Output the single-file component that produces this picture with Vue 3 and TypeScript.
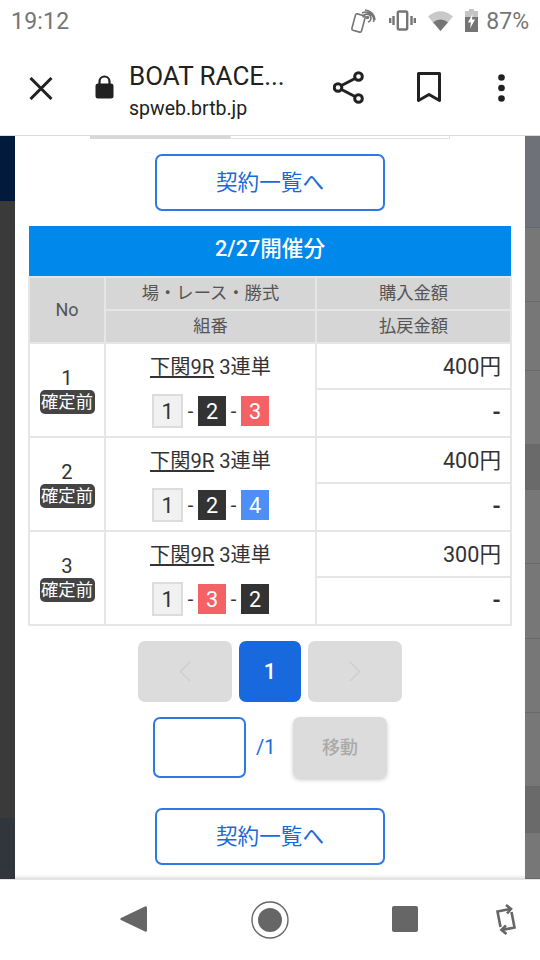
<script setup lang="ts">
interface Tile { n: number; kind: string }
interface Row { no: number; race: string; type: string; tiles: Tile[]; amount: string }

const rows: Row[] = [
  { no: 1, race: '下関9R', type: '3連単', amount: '400円', tiles: [{ n: 1, kind: 'white' }, { n: 2, kind: 'black' }, { n: 3, kind: 'red' }] },
  { no: 2, race: '下関9R', type: '3連単', amount: '400円', tiles: [{ n: 1, kind: 'white' }, { n: 2, kind: 'black' }, { n: 4, kind: 'blue' }] },
  { no: 3, race: '下関9R', type: '3連単', amount: '300円', tiles: [{ n: 1, kind: 'white' }, { n: 3, kind: 'red' }, { n: 2, kind: 'black' }] },
]

const stripes = [
  { h: 92, c: 'slate' }, { h: 74, c: 'mid' }, { h: 69, c: 'mid' }, { h: 74, c: 'mid' }, { h: 45, c: 'dark' },
  { h: 74, c: 'mid' }, { h: 75, c: 'mid' }, { h: 74, c: 'mid' }, { h: 74, c: 'mid' }, { h: 46, c: 'dark' }, { h: 46, c: 'mid' },
]
</script>

<template>
  <div class="screen">
    <header class="status">
      <span class="time">19:12</span>
      <span class="status-right">
        <svg class="ic-nfc" width="27" height="26" viewBox="0 0 27 26" fill="none" stroke="#757575">
          <rect x="3.5" y="6.5" width="10" height="17" rx="1.5" transform="rotate(15 8.5 15)" stroke-width="1.6" />
          <path d="M13 9.5a4 4 0 1 1 5 4.5M12 5a8 8 0 0 1 11.500 9M15 2a10.500 10.500 0 0 1 10 10" stroke-width="1.600" />
          <circle cx="17.500" cy="9.500" r="1.800" fill="#757575" stroke="none" />
        </svg>
        <svg class="ic-vib" width="27" height="21" viewBox="0 0 27 21" fill="none" stroke="#757575" stroke-width="2.400">
          <rect x="8.800" y="1.500" width="9.400" height="18" rx="1.500" />
          <path d="M4.500 6v9M1.200 8v5M22.500 6v9M25.800 8v5" />
        </svg>
        <svg class="ic-wifi" width="25" height="21" viewBox="0 0 25 21">
          <path d="M0 6.500Q12.500 -4 25 6.500L12.500 21Z" fill="#c9c9c9" />
          <path d="M5 12.300Q12.500 6.500 20 12.300L12.500 21Z" fill="#757575" />
        </svg>
        <svg class="ic-bat" width="13" height="23" viewBox="0 0 13 23">
          <path d="M4 0h5v2h4v8H0V2h4z" fill="#c4c4c4" />
          <path d="M0 8h13v15H0z" fill="#757575" />
          <path d="M7.500 5L3 13.500h3L5 19.500l5-9H7z" fill="#fff" />
        </svg>
        <span class="pct">87%</span>
      </span>
    </header>

    <div class="toolbar">
      <svg class="t-close" width="24" height="23" viewBox="0 0 24 23" fill="none" stroke="#212121" stroke-width="3">
        <path d="M1.500 1l21 21M22.500 1l-21 21" />
      </svg>
      <svg class="t-lock" width="19" height="24" viewBox="0 0 19 24">
        <path d="M4.500 9V6.500a5 5 0 0 1 10 0V9" fill="none" stroke="#212121" stroke-width="2.200" />
        <rect x="0.500" y="8.500" width="18" height="15" rx="2.500" fill="#212121" />
      </svg>
      <div class="t-title">
        <div class="t-name">BOAT RACE...</div>
        <div class="t-url">spweb.brtb.jp</div>
      </div>
      <svg class="t-share" width="31" height="33" viewBox="0 0 31 33" fill="none" stroke="#212121" stroke-width="3">
        <circle cx="25.500" cy="5.500" r="3.800" />
        <circle cx="5" cy="16.500" r="3.800" />
        <circle cx="25.500" cy="27.500" r="3.800" />
        <path d="M8.500 14.500l13.500-7M8.500 18.500l13.500 7" />
      </svg>
      <svg class="t-mark" width="24" height="31" viewBox="0 0 24 31" fill="none" stroke="#212121" stroke-width="3">
        <path d="M1.500 1.500h21v27L12 22.500 1.500 28.500z" stroke-linejoin="round" />
      </svg>
      <svg class="t-more" width="7" height="28" viewBox="0 0 7 28" fill="#212121">
        <circle cx="3.500" cy="3.500" r="3.300" />
        <circle cx="3.500" cy="14" r="3.300" />
        <circle cx="3.500" cy="24.500" r="3.300" />
      </svg>
    </div>

    <main class="main">
      <div class="strip strip-left">
        <div class="left-a"></div>
        <div class="left-b"></div>
        <div class="left-c"></div>
      </div>

      <section class="card">
        <div class="cut"><span class="cut-a"></span><span class="cut-b"></span></div>
        <button class="outline top-btn">契約一覧へ</button>

        <div class="date-bar">2/27開催分</div>
        <table class="grid">
          <colgroup>
            <col class="c1" />
            <col class="c2" />
            <col class="c3" />
          </colgroup>
          <thead>
            <tr class="hrow">
              <th rowspan="2">No</th>
              <th>場・レース・勝式</th>
              <th>購入金額</th>
            </tr>
            <tr class="hrow">
              <th>組番</th>
              <th>払戻金額</th>
            </tr>
          </thead>
          <tbody>
            <template v-for="r in rows" :key="r.no">
              <tr class="r1">
                <td rowspan="2" class="no">
                  <div class="no-num">{{ r.no }}</div>
                  <span class="badge">確定前</span>
                </td>
                <td rowspan="2" class="race">
                  <div class="race-name"><u>{{ r.race }}</u> {{ r.type }}</div>
                  <div class="tiles">
                    <template v-for="(t, i) in r.tiles" :key="i">
                      <span v-if="i > 0" class="dash">-</span>
                      <span class="tile" :class="t.kind">{{ t.n }}</span>
                    </template>
                  </div>
                </td>
                <td class="amt">{{ r.amount }}</td>
              </tr>
              <tr class="r2">
                <td class="amt minus">-</td>
              </tr>
            </template>
          </tbody>
        </table>

        <nav class="pager">
          <span class="pg pg-off">
            <svg width="12" height="21" viewBox="0 0 12 21" fill="none" stroke="#cfcfcf" stroke-width="1.500"><path d="M11 1L1.500 10.500 11 20" /></svg>
          </span>
          <span class="pg pg-on">1</span>
          <span class="pg pg-off">
            <svg width="12" height="21" viewBox="0 0 12 21" fill="none" stroke="#cfcfcf" stroke-width="1.500"><path d="M1 1l9.500 9.500L1 20" /></svg>
          </span>
        </nav>

        <div class="jump">
          <input class="jump-input" type="text" />
          <span class="jump-total">/1</span>
          <button class="jump-btn">移動</button>
        </div>

        <button class="outline bottom-btn">契約一覧へ</button>
      </section>

      <div class="strip strip-right">
        <div v-for="(s, i) in stripes" :key="i" class="stripe" :class="s.c" :style="{ height: s.h + 'px' }"></div>
      </div>
    </main>

    <footer class="nav">
      <svg class="n-back" width="27" height="28" viewBox="0 0 27 28" fill="#666">
        <path d="M25 1.500a1.500 1.500 0 0 1 2 1.300v22.400a1.500 1.500 0 0 1-2 1.300L1 15a1.200 1.200 0 0 1 0-2z" />
      </svg>
      <svg class="n-home" width="38" height="38" viewBox="0 0 38 38">
        <circle cx="19" cy="19" r="18" fill="none" stroke="#666" stroke-width="1.400" />
        <circle cx="19" cy="19" r="12" fill="#666" />
      </svg>
      <span class="n-square"></span>
      <svg class="n-rot" width="22" height="31" viewBox="0 0 22 31" fill="none" stroke="#666" stroke-width="2.600">
        <path d="M15 5L2.500 7.500l3 15.500" />
        <path d="M7 26l12.500-2.500-3-15.500" />
        <path d="M11 1l5 4-4 4.500M11 21.500l-4.500 4.500 5 4" />
      </svg>
    </footer>
  </div>
</template>

<style>
html, body { margin: 0; background: #fff; }
</style>

<style scoped>
.screen {
  width: 540px;
  height: 960px;
  display: flex;
  flex-direction: column;
  overflow: hidden;
  background: #fff;
  font-family: Roboto, "Noto Sans CJK JP", sans-serif;
}

.status {
  height: 47px;
  flex: none;
  display: flex;
  align-items: flex-start;
  justify-content: space-between;
  color: #757575;
  font-size: 23px;
}
.time { margin: 8px 0 0 11px; line-height: 28px; letter-spacing: 0.2px; }
.status-right { display: flex; align-items: flex-start; }
.ic-nfc { margin-top: 8px; }
.ic-vib { margin: 10px 0 0 12px; }
.ic-wifi { margin: 10px 0 0 12px; }
.ic-bat { margin: 9px 0 0 12px; }
.pct { margin: 8px 11px 0 8px; line-height: 28px; }

.toolbar {
  height: 89px;
  flex: none;
  display: flex;
  align-items: flex-start;
  box-sizing: border-box;
  border-bottom: 1px solid #dcdcdc;
}
.t-close { margin: 30px 0 0 29px; }
.t-lock { margin: 28px 0 0 42px; }
.t-title { width: 204px; margin: 13px 0 0 15px; color: #212121; flex: none; }
.t-name { font-size: 26px; line-height: 32px; white-space: nowrap; }
.t-url { font-size: 19.500px; line-height: 26px; margin-top: 4px; white-space: nowrap; }
.t-share { margin: 24px 0 0 0; }
.t-mark { margin: 25px 0 0 53px; }
.t-more { margin: 27px 0 0 57px; }

.main { flex: 1; display: flex; min-height: 0; }
.strip { width: 15px; flex: none; display: flex; flex-direction: column; }
.left-a { height: 65px; background: #021a3c; }
.left-b { flex: 1; background: #3a3a3a; }
.left-c { height: 61px; background: #31353c; }
.strip-left { box-shadow: inset -1px 0 0 #8a8a8a; }
.strip-right { box-shadow: inset 1px 0 0 #9a9a9a; }
.stripe { flex: none; box-sizing: border-box; border-bottom: 1px solid #686868; }
.slate { background: #6e7278; }
.mid { background: #777; }
.dark { background: #6a6a6a; }

.card {
  width: 510px;
  flex: none;
  background: #fff;
  display: flex;
  flex-direction: column;
  align-items: center;
  box-shadow: inset 0 -4px 4px -3px #d0d0d0;
}
.cut { width: 360px; height: 3px; display: flex; }
.cut-a { width: 140px; background: #d8d8d8; }
.cut-b { flex: 1; box-sizing: border-box; border: 1px solid #e2e2e2; border-top: 0; }

.outline {
  width: 230px;
  height: 57px;
  flex: none;
  box-sizing: border-box;
  background: #fff;
  border: 2px solid #2f79e2;
  border-radius: 7px;
  color: #1a69dc;
  font: 21.600px "Noto Sans CJK JP", sans-serif;
  padding: 0 0 4px;
}
.top-btn { margin-top: 15px; }
.bottom-btn { margin-top: 30px; }

.date-bar {
  width: 482px;
  height: 50px;
  flex: none;
  margin-top: 15px;
  background: #0088ea;
  color: #fff;
  font: 500 21.600px/46px Roboto, "Noto Sans CJK JP", sans-serif;
  text-align: center;
}

.grid {
  width: 482px;
  height: 350px;
  flex: none;
  table-layout: fixed;
  border-collapse: collapse;
  font-family: Roboto, "Noto Sans CJK JP", sans-serif;
}
.c1 { width: 76px; }
.c2 { width: 211px; }
.c3 { width: 195px; }
.grid th, .grid td { border: 2px solid #e6e6e6; padding: 0; }
.grid th {
  background: #d6d6d6;
  color: #555;
  font-size: 17.300px;
  font-weight: 400;
  padding-bottom: 4px;
}
.grid th[rowspan] { font-size: 18px; padding-bottom: 1px; }
.hrow { height: 33px; }
.r1 { height: 46px; }
.r2 { height: 48px; }

.no { text-align: center; color: #333; }
.no-num { font-size: 20.200px; line-height: 24px; margin-bottom: 0; }
.badge {
  display: inline-block;
  background: #444;
  color: #fff;
  font-size: 17.300px;
  line-height: 24px;
  width: 55px;
  border-radius: 5px;
  vertical-align: top;
}

.race { text-align: center; color: #333; }
.race-name { font-size: 20.200px; line-height: 30px; }
.tiles {
  display: flex;
  justify-content: center;
  align-items: center;
  margin-top: 12px;
  height: 34px;
}
.dash { width: 15px; text-align: center; font-size: 20px; color: #333; }
.tile {
  width: 28px;
  height: 30px;
  box-sizing: border-box;
  display: flex;
  align-items: center;
  justify-content: center;
  font-size: 21.600px;
  color: #fff;
}
.tile.white {
  width: 31px;
  height: 34px;
  background: #f1f1f1;
  border: 2px solid #dcdcdc;
  color: #333;
}
.tile.black { background: #333; }
.tile.red { background: #f56266; }
.tile.blue { background: #4d8ff5; }

.grid .amt { text-align: right; padding: 0 9px 3px 0; color: #333; font-size: 21.600px; }
.grid .minus { font-weight: 700; font-size: 22px; padding-bottom: 1px; }

.pager { display: flex; gap: 7px; margin-top: 15px; flex: none; }
.pg {
  height: 61px;
  border-radius: 7px;
  display: flex;
  align-items: center;
  justify-content: center;
  box-sizing: border-box;
}
.pg-off { width: 94px; background: #dcdcdc; }
.pg-on {
  width: 62px;
  background: #1769dd;
  color: #fff;
  font: 500 21.600px Roboto, sans-serif;
}

.jump { display: flex; align-items: flex-start; margin-top: 15px; flex: none; width: 234px; }
.jump-input {
  width: 93px;
  height: 61px;
  box-sizing: border-box;
  border: 2px solid #2f79e2;
  border-radius: 7px;
  background: #fff;
  padding: 0;
  outline: 0;
}
.jump-total {
  width: 47px;
  box-sizing: border-box;
  padding-left: 10px;
  color: #1a69dc;
  font: 20px/61px Roboto, sans-serif;
}
.jump-btn {
  width: 94px;
  height: 61px;
  border: 0;
  padding: 0 0 4px;
  border-radius: 7px;
  background: #dcdcdc;
  color: #aaa;
  font: 500 18px "Noto Sans CJK JP", sans-serif;
  box-shadow: 0 2px 4px rgba(0, 0, 0, 0.2);
}

.nav {
  height: 81px;
  flex: none;
  display: flex;
  align-items: flex-start;
  background: #fff;
  border-top: 1px solid #e4e4e4;
  box-sizing: border-box;
}
.n-back { margin: 25px 0 0 120px; }
.n-home { margin: 21px 0 0 104px; }
.n-square { width: 26px; height: 26px; margin: 26px 0 0 103px; background: #666; border-radius: 2px; }
.n-rot { margin: 24px 0 0 77px; }
</style>
